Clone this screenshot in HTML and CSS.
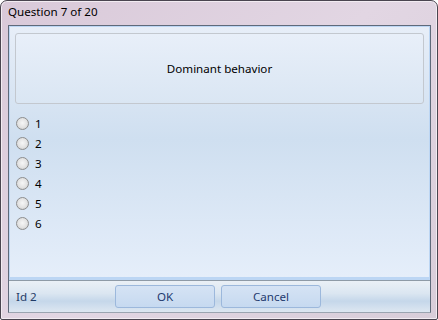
FILE: index.html
```html
<!DOCTYPE html>
<html lang="en">
  <head>
    <meta charset="UTF-8" />
    <title>Question 7 of 20</title>
    <link rel="stylesheet" href="styles.css">
  </head>
  <body>
    <div class="window">
      <div class="titlebar">Question 7 of 20</div>
      <div class="client">
        <div class="panel">
          <div class="question">Dominant behavior</div>
          <div class="answers">
            <label class="answer"><span class="radio"></span>1</label>
            <label class="answer"><span class="radio"></span>2</label>
            <label class="answer"><span class="radio"></span>3</label>
            <label class="answer"><span class="radio"></span>4</label>
            <label class="answer"><span class="radio"></span>5</label>
            <label class="answer"><span class="radio"></span>6</label>
          </div>
        </div>
        <div class="footer">
          <span class="id">Id 2</span>
          <button class="btn">OK</button>
          <button class="btn">Cancel</button>
        </div>
      </div>
    </div>
  </body>
</html>
```

FILE: styles.css
```css
html, body {
  margin: 0;
  padding: 0;
}

body {
  width: 438px;
  height: 320px;
  font-family: "Noto Sans", "DejaVu Sans", sans-serif;
  font-size: 11.6px;
  background: #ffffff;
}

.window {
  box-sizing: border-box;
  width: 438px;
  height: 320px;
  border: 1px solid #4a4550;
  border-radius: 7px 7px 2px 2px;
  background: linear-gradient(135deg, #d9c9d9 0%, #e2d6e3 50%, #d8cdd9 100%);
  padding: 0 6px 6px 7px;
  display: flex;
  flex-direction: column;
  box-shadow: inset 0 0 0 1px #f2ecf2;
}

.titlebar {
  height: 24px;
  line-height: 22px;
  color: #000000;
}

.client {
  flex: 1;
  display: flex;
  flex-direction: column;
  border: 1px solid #5f6a7a;
  border-bottom-color: #9aa4b0;
  background: #e4ecf5;
}

.panel {
  flex: 1;
  border: 1px solid #bcd6f4;
  border-bottom-width: 3px;
  background: linear-gradient(to bottom, #e7eef8 0%, #cfdff0 45%, #e5eefa 100%);
  padding: 6px 5px 0 5px;
}

.question {
  height: 69px;
  border: 1px solid #c3c8cf;
  border-radius: 3px;
  background: linear-gradient(to bottom, #e8eff9, #dae6f3);
  display: flex;
  align-items: center;
  justify-content: center;
  color: #000000;
}

.answers {
  display: flex;
  flex-direction: column;
  margin-top: 9px;
  padding-left: 1px;
}

.answer {
  display: flex;
  align-items: center;
  height: 20px;
  gap: 6px;
  color: #000000;
}

.radio {
  width: 11px;
  height: 11px;
  border-radius: 50%;
  border: 1px solid #8d8d8d;
  background: radial-gradient(circle at 50% 45%, #f6f6f6 0%, #e2e2e2 55%, #c4c4c4 100%);
}

.footer {
  height: 31px;
  border-top: 1px solid #8e9aa6;
  background: linear-gradient(to bottom, #eaf0f6 0%, #dbe6f1 40%, #c5d7ea 65%, #dde7f1 100%);
  display: flex;
  align-items: center;
  padding-left: 7px;
}

.id {
  width: 99px;
  color: #1f3b66;
}

.btn {
  width: 100px;
  height: 23px;
  margin-right: 6px;
  border: 1px solid #9cb8dc;
  border-radius: 3px;
  background: linear-gradient(to bottom, #d5e3f4, #c6d9f0);
  color: #1e3a6e;
  font-family: "Noto Sans", "DejaVu Sans", sans-serif;
  font-size: 11.6px;
  padding: 0;
}
```
